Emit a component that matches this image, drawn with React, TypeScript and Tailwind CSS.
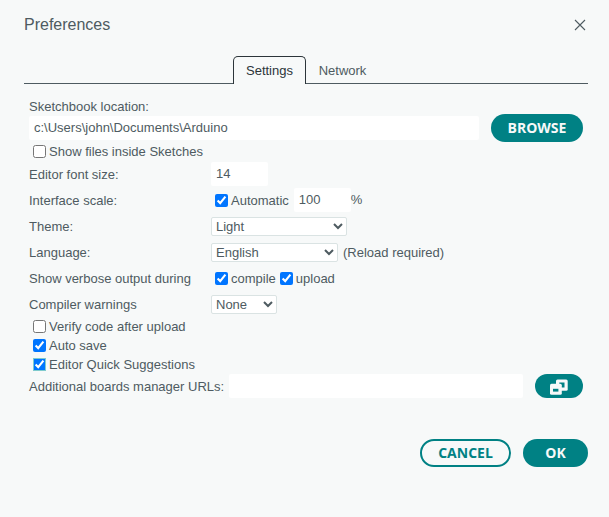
import type { ComponentProps, ReactNode } from "react";

const solidButton = "rounded-full bg-[#008184] font-['Open_Sans',sans-serif] text-sm font-bold text-[#f7f9f9]";
const selectClass = "h-[19px] rounded-xs border border-[#dae3e3] bg-white";
const fieldClass = "h-6 rounded-xs bg-white px-[5px]";

function Check({ label, className = "", ...rest }: { label: string } & ComponentProps<"input">) {
  return (
    <label className="flex h-[19px] items-center gap-[3px] pl-1">
      <input type="checkbox" className={"size-[13px] " + className} {...rest} />
      <span className="pt-px">{label}</span>
    </label>
  );
}

function Row({ label, id, children }: { label: string; id?: string; children: ReactNode }) {
  return (
    <div className="grid h-[26px] grid-cols-[182px_1fr] items-center">
      {id ? <label htmlFor={id} className="pt-0.5">{label}</label> : <span className="pt-0.5">{label}</span>}
      <div className="flex items-center">{children}</div>
    </div>
  );
}

export default function App() {
  return (
    <main className="min-h-screen bg-[#f7f9f9] font-['Liberation_Sans',Arial,sans-serif] text-[13px] leading-[18px] text-[#4e5b61]">
      <header className="flex h-14 items-center justify-between pr-[23px] pb-1.5 pl-6">
        <h1 className="text-base">Preferences</h1>
        <button type="button" aria-label="Close" className="flex size-3 items-center justify-center">
          <svg viewBox="0 0 12 12" className="size-3" stroke="currentColor" strokeWidth="1.1">
            <path d="M1 1l10 10M11 1L1 11" />
          </svg>
        </button>
      </header>

      <div role="tablist" className="mr-[21px] ml-6 flex">
        <span className="w-[209px] border-b border-[#4e5b61]" />
        <button
          type="button"
          role="tab"
          aria-selected="true"
          className="h-7 w-[73px] rounded-t-[5px] border border-b-0 border-[#2c353a] text-[#2c353a]"
        >
          Settings
        </button>
        <button type="button" role="tab" aria-selected="false" className="h-7 w-[73px] border-b border-[#4e5b61] pt-0.5">
          Network
        </button>
        <span className="grow border-b border-[#4e5b61]" />
      </div>

      <form className="pt-3.5 pr-[26px] pl-[29px]">
        <label htmlFor="location" className="block h-4">
          Sketchbook location:
        </label>
        <div className="flex items-center gap-3">
          <input
            id="location"
            type="text"
            defaultValue="c:\Users\john\Documents\Arduino"
            className={fieldClass + " min-w-0 grow pb-0.5"}
          />
          <button type="button" className={solidButton + " h-7 w-[92px]"}>
            BROWSE
          </button>
        </div>
        <Check label="Show files inside Sketches" />
        <Row label="Editor font size:" id="font-size">
          <input id="font-size" type="text" defaultValue="14" className={fieldClass + " w-[57px] pb-0.5"} />
        </Row>
        <Row label="Interface scale:">
          <Check label="Automatic" defaultChecked />
          <input
            type="text"
            aria-label="Scale"
            defaultValue="100"
            className={fieldClass + " ml-[5px] w-[57px] pb-0.5"}
          />
          %
        </Row>
        <Row label="Theme:" id="theme">
          <select id="theme" className={selectClass + " w-[136px]"}>
            <option>Light</option>
          </select>
        </Row>
        <Row label="Language:" id="language">
          <select id="language" className={selectClass + " w-[127px]"}>
            <option>English</option>
          </select>
          <span className="pt-0.5 pl-[5px]">(Reload required)</span>
        </Row>
        <Row label="Show verbose output during">
          <Check label="compile" defaultChecked />
          <Check label="upload" defaultChecked />
        </Row>
        <Row label="Compiler warnings" id="warnings">
          <select id="warnings" className={selectClass + " w-[66px]"}>
            <option>None</option>
          </select>
        </Row>
        <Check label="Verify code after upload" />
        <Check label="Auto save" defaultChecked />
        <Check label="Editor Quick Suggestions" defaultChecked className="outline-1 -outline-offset-1 outline-[#7fcbcd]" />
        <div className="flex items-center">
          <label htmlFor="urls" className="pt-0.5">Additional boards manager URLs:</label>
          <input id="urls" type="text" className={fieldClass + " ml-[5px] min-w-0 grow"} />
          <button
            type="button"
            aria-label="Edit boards manager URLs"
            className={solidButton + " ml-3 flex h-6 w-12 items-center justify-center"}
          >
            <svg viewBox="0 0 18 17" className="h-[17px] w-[18px]" fill="currentColor">
              <rect x="6" y="1.5" width="11.7" height="11.2" rx="1.5" />
              <rect x="9.3" y="4.5" width="5.2" height="5" fill="#008184" />
              <rect x="0" y="5.8" width="11.8" height="11" rx="1.5" />
              <rect x="3" y="10.8" width="5.4" height="2.8" fill="#008184" />
            </svg>
          </button>
        </div>
      </form>

      <footer className="flex justify-end gap-3 pt-[41px] pr-[21px]">
        <button
          type="button"
          className="h-7 w-[91px] rounded-full border-2 border-[#008184] font-['Open_Sans',sans-serif] text-sm font-bold text-[#008184]"
        >
          CANCEL
        </button>
        <button type="button" className={solidButton + " h-7 w-[65px]"}>
          OK
        </button>
      </footer>
    </main>
  );
}
